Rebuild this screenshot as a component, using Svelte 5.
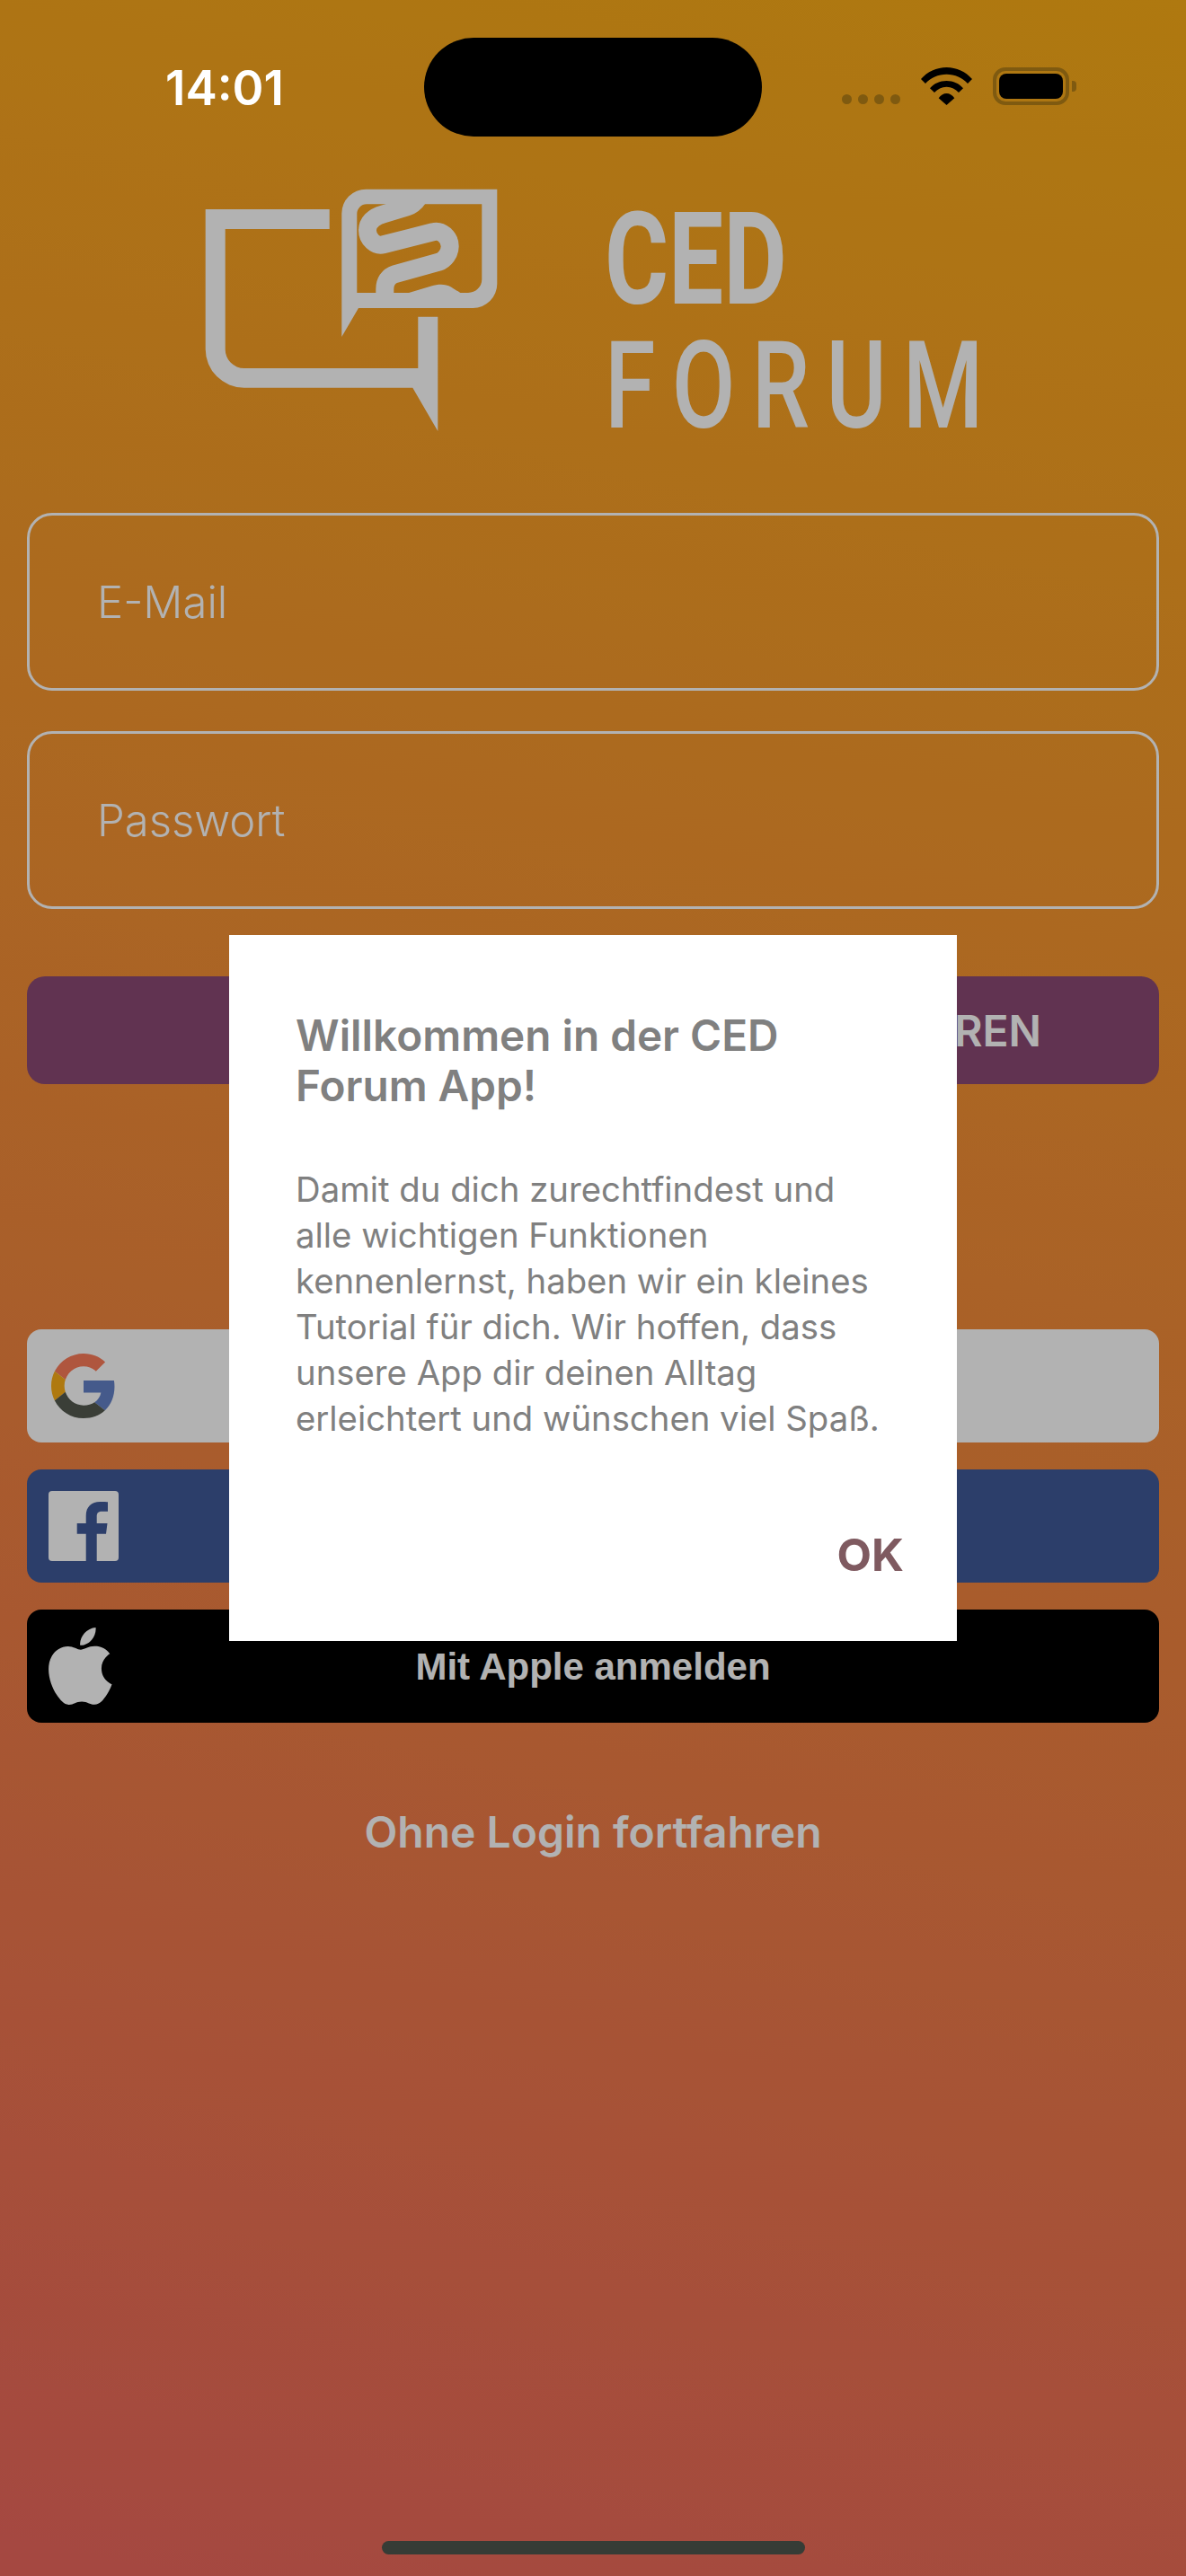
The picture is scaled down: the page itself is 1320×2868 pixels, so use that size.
<script>
  const socials = [
    { id: 'google', label: '' },
    { id: 'facebook', label: '' },
    { id: 'apple', label: 'Mit Apple anmelden' }
  ];
</script>

<div class="screen">
  <header class="status">
    <div class="time">14:01</div>
    <div class="island"></div>
    <div class="indicators">
      <div class="dots"><i></i><i></i><i></i><i></i></div>
      <svg class="wifi" viewBox="0 0 57 42" aria-hidden="true">
        <path d="M0 13C7 5 17.500 0 28.500 0S50 5 57 13L52 18C46.500 11.500 37.500 7.700 28.500 7.700S10.500 11.500 5 18Z" />
        <path d="M10 23.300C14.500 18 21 15 28.500 15S42.500 18 47 23.300L42 28C38.500 24 34 21.700 28.500 21.700S18.500 24 15 28Z" />
        <path d="M19.700 34.300C22 31 25 29 28.500 29S35 31 37.300 34.300L28.500 42Z" />
      </svg>
      <div class="battery"><div class="cell"></div></div>
      <div class="nub"></div>
    </div>
  </header>

  <section class="brand">
    <svg class="mark" viewBox="0 0 326 270" aria-hidden="true">
      <path d="M0.700 23H138.700V45H22.700V179A21 21 0 0 0 43.700 200H237.300V142.700H259.300V270L231.300 221.700H43.700A43 43 0 0 1 0.700 178.700Z" />
      <path fill-rule="evenodd" d="M152.300 165V27.700A27 27 0 0 1 179.300 0.700H325.300V106A27 27 0 0 1 298.300 133H171ZM169.300 116H293A15.300 15 0 0 0 308.300 101V17.300H180A10.700 10.700 0 0 0 169.300 28Z" />
      <path class="gut" d="M238 10C234 16 230 19 225 20.500L198.700 28.300C187 31.500 181 38 181 46.700C181 56 190 64.500 198.700 62.300L253.700 48.300C263 45.500 272.700 54 272.700 64.300C272.700 72 267 79.500 260.300 81.700L212 95C204 97.500 200.300 104 200.300 111.700V118" />
      <path d="M225 118L227 116L252 108.500C260 106 268 106 274 109.500C278 112 281 114 284.300 116V118Z" />
    </svg>
    <div class="wordmark">
      <div class="ced">CED</div>
      <div class="forum">FORUM</div>
    </div>
  </section>

  <main class="form">
    <div class="field">E-Mail</div>
    <div class="field">Passwort</div>
    <div class="primary"><span>REGISTRIEREN</span></div>

    <div class="socials">
      {#each socials as s}
        <div class="social {s.id}">
          {#if s.id === 'google'}
            <svg class="g-icon" viewBox="0 0 48 48" aria-hidden="true">
              <path fill="#fb7b59" d="M24 9.500c3.540 0 6.710 1.220 9.210 3.600l6.850-6.850C35.900 2.380 30.470 0 24 0 14.620 0 6.510 5.380 2.560 13.220l7.980 6.190C12.430 13.720 17.740 9.500 24 9.500z" />
              <path fill="#6482c8" d="M46.980 24.550c0-1.570-.15-3.090-.38-4.550H24v9.020h12.940c-.58 2.960-2.260 5.480-4.780 7.180l7.730 6c4.510-4.180 7.090-10.360 7.090-17.650z" />
              <path fill="#fbae17" d="M10.530 28.590c-.48-1.450-.76-2.990-.76-4.590s.27-3.140.76-4.590l-7.980-6.190C.92 16.460 0 20.120 0 24c0 3.880.92 7.540 2.560 10.780l7.970-6.190z" />
              <path fill="#53594f" d="M24 48c6.480 0 11.930-2.130 15.890-5.810l-7.730-6c-2.150 1.450-4.920 2.300-8.160 2.300-6.260 0-11.570-4.220-13.470-9.910l-7.980 6.190C6.510 42.620 14.620 48 24 48z" />
            </svg>
          {:else if s.id === 'facebook'}
            <svg class="f-icon" viewBox="0 0 78 78" aria-hidden="true">
              <rect width="78" height="78" rx="4" fill="#fff" />
              <path fill="#3f5999" d="M53.700 78V47.700H64L65.500 36H53.700V28.500C53.700 25 54.700 22.700 59.500 22.700H66V12.300C64.900 12.200 61.500 12 57.300 12C48 12 41.700 17.500 41.700 27.500V36H31.700V47.700H41.700V78Z" />
            </svg>
          {:else}
            <svg class="a-icon" viewBox="2.200 0 19.700 24" preserveAspectRatio="none" aria-hidden="true">
              <path fill="#fff" d="M12.152 6.896c-.948 0-2.415-1.078-3.960-1.040-2.040.027-3.910 1.183-4.961 3.014-2.117 3.675-.546 9.103 1.519 12.090 1.013 1.454 2.208 3.090 3.792 3.039 1.520-.065 2.090-.987 3.935-.987 1.831 0 2.350.987 3.960.948 1.637-.026 2.676-1.480 3.676-2.948 1.156-1.688 1.636-3.325 1.662-3.415-.039-.013-3.182-1.221-3.220-4.857-.026-3.040 2.480-4.494 2.597-4.559-1.429-2.090-3.623-2.324-4.390-2.376-2-.156-3.675 1.090-4.610 1.090zM15.530 3.830c.843-1.012 1.400-2.427 1.245-3.830-1.207.052-2.662.805-3.532 1.818-.780.896-1.454 2.338-1.273 3.714 1.338.104 2.715-.688 3.559-1.701" />
            </svg>
          {/if}
          {#if s.label}<span class="social-label">{s.label}</span>{/if}
        </div>
      {/each}
    </div>

    <div class="guest">Ohne Login fortfahren</div>
  </main>

  <div class="scrim">
    <div class="dialog" role="dialog">
      <h2>Willkommen in der CED Forum App!</h2>
      <p>Damit du dich zurechtfindest und alle wichtigen Funktionen kennenlernst, haben wir ein kleines Tutorial für dich. Wir hoffen, dass unsere App dir deinen Alltag erleichtert und wünschen viel Spaß.</p>
      <div class="actions"><span class="ok">OK</span></div>
    </div>
  </div>

  <div class="home"></div>
</div>

<style>
  :global(body) {
    margin: 0;
  }

  .screen {
    position: relative;
    width: 1320px;
    height: 2868px;
    overflow: hidden;
    display: flex;
    flex-direction: column;
    background: linear-gradient(193deg, #fbae17 0%, #ec675e 100%);
    font-family: Inter, "Liberation Sans", sans-serif;
    color: #fff;
  }

  .status {
    position: relative;
    z-index: 3;
    display: flex;
    align-items: flex-start;
    height: 168px;
    padding-top: 42px;
    box-sizing: border-box;
  }

  .time {
    width: 472px;
    box-sizing: border-box;
    padding: 26px 0 0 184px;
    font-size: 53px;
    font-weight: 600;
    line-height: 60px;
  }

  .island {
    width: 376px;
    height: 110px;
    border-radius: 55px;
    background: #000;
  }

  .indicators {
    display: flex;
    align-items: flex-start;
    margin: 33px 0 0 89px;
    height: 42px;
  }

  .dots {
    display: flex;
    gap: 7px;
    margin-top: 30px;
    width: 88px;
  }

  .dots i {
    width: 11px;
    height: 11px;
    border-radius: 50%;
    background: #7f5a10;
  }

  .wifi {
    width: 57px;
    height: 42px;
    fill: #000;
  }

  .battery {
    width: 85px;
    height: 42px;
    margin-left: 23px;
    box-sizing: border-box;
    border: 4px solid #7f5a10;
    border-radius: 14px;
    padding: 3px;
  }

  .cell {
    height: 100%;
    border-radius: 8px;
    background: #000;
  }

  .nub {
    width: 5px;
    height: 12px;
    margin: 15px 0 0 3px;
    border-radius: 0 4px 4px 0;
    background: #7f5a10;
  }

  .brand {
    display: flex;
    align-items: flex-start;
    margin: 42px 0 0 228px;
    height: 270px;
  }

  .mark {
    width: 326px;
    height: 270px;
    flex: none;
    fill: #fff;
  }

  .gut {
    fill: none;
    stroke: #fff;
    stroke-width: 20;
  }

  .wordmark {
    margin: 28px 0 0 119px;
    font-family: Roboto, "Liberation Sans", sans-serif;
  }

  .ced {
    font-size: 143px;
    font-weight: 700;
    line-height: 102px;
    transform: scaleX(0.76);
    transform-origin: left;
  }

  .forum {
    margin-top: 42px;
    font-size: 135px;
    font-weight: 500;
    line-height: 96px;
    letter-spacing: 24px;
    transform: scaleX(0.76);
    transform-origin: left;
  }

  .form {
    display: flex;
    flex-direction: column;
    margin: 91px 30px 0;
  }

  .field {
    box-sizing: border-box;
    height: 198px;
    margin-bottom: 45px;
    padding-left: 75px;
    display: flex;
    align-items: center;
    border: 3px solid #fff;
    border-radius: 28px;
    font-size: 49px;
    font-weight: 300;
  }

  .primary {
    height: 120px;
    margin-top: 30px;
    padding-right: 131px;
    display: flex;
    align-items: center;
    justify-content: flex-end;
    border-radius: 20px;
    background: #8b4a75;
    font-size: 48px;
    font-weight: 600;
  }

  .socials {
    display: flex;
    flex-direction: column;
    gap: 30px;
    margin-top: 273px;
  }

  .social {
    height: 126px;
    display: grid;
    grid-template-columns: 1fr auto 1fr;
    align-items: center;
    padding-left: 24px;
    border-radius: 16px;
    font-family: "Liberation Sans", Arial, sans-serif;
    font-size: 42px;
    font-weight: 700;
  }

  .social-label {
    grid-column: 2;
    grid-row: 1;
    margin-left: -24px;
    padding-top: 2px;
  }

  .google {
    background: #fff;
    padding-left: 27px;
  }

  .facebook {
    background: #3f5999;
  }

  .apple {
    background: #000;
  }

  .g-icon {
    width: 72px;
    height: 72px;
    grid-column: 1;
    grid-row: 1;
  }

  .f-icon {
    width: 78px;
    height: 78px;
    grid-column: 1;
    grid-row: 1;
  }

  .a-icon {
    width: 71px;
    height: 86px;
    grid-column: 1;
    grid-row: 1;
  }

  .guest {
    margin-top: 92px;
    text-align: center;
    font-size: 48px;
    font-weight: 600;
  }

  .scrim {
    position: absolute;
    inset: 0;
    z-index: 2;
    display: flex;
    align-items: center;
    justify-content: center;
    background: rgba(0, 0, 0, 0.3);
  }

  .dialog {
    width: 810px;
    box-sizing: border-box;
    padding: 84px 80px 68px 74px;
    background: #fff;
    color: #808080;
  }

  h2 {
    margin: 0;
    font-size: 47.700px;
    line-height: 56px;
    font-weight: 600;
  }

  p {
    margin: 62px 0 0;
    font-size: 38.300px;
    line-height: 51px;
    font-weight: 400;
  }

  .actions {
    display: flex;
    justify-content: flex-end;
    margin: 98px -21px 0 0;
  }

  .ok {
    font-size: 50px;
    line-height: 56px;
    font-weight: 700;
    color: #7f5a60;
  }

  .home {
    position: relative;
    z-index: 3;
    align-self: center;
    width: 471px;
    height: 15px;
    margin-top: auto;
    margin-bottom: 24px;
    border-radius: 8px;
    background: #363c36;
  }
</style>
